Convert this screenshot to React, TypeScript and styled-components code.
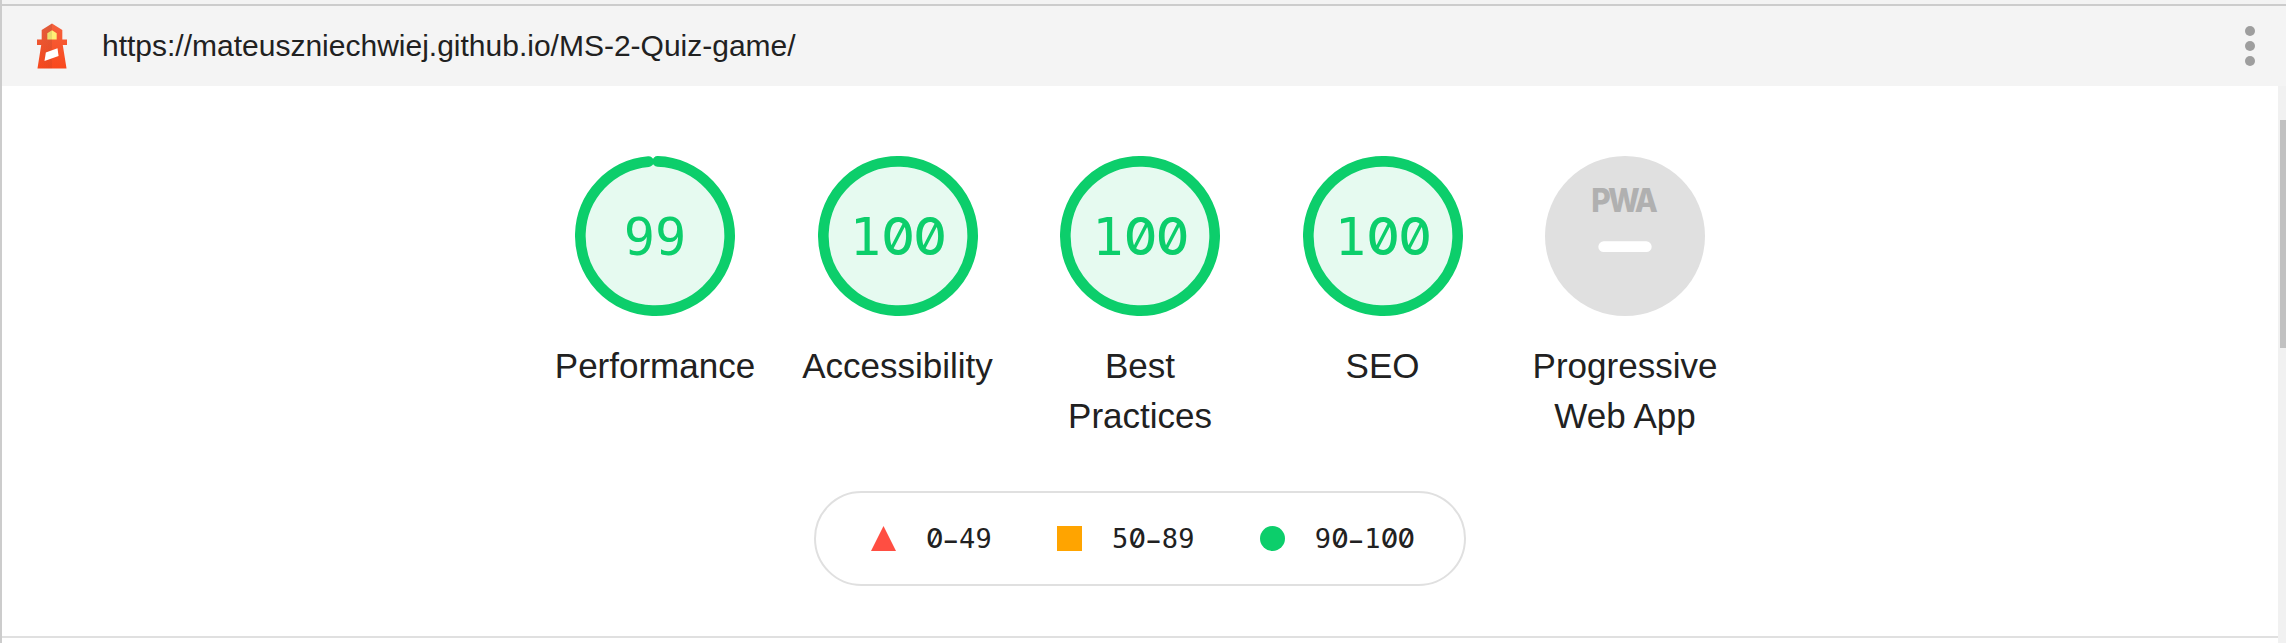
import React from 'react';
import styled, { createGlobalStyle } from 'styled-components';

const GlobalStyle = createGlobalStyle`
  * { box-sizing: border-box; }
  body { margin: 0; background: #fff; color: #212121; font-family: 'Liberation Sans', Arial, sans-serif; }
`;

const Panel = styled.div`
  display: flex;
  flex-direction: column;
  height: 643px;
  overflow: hidden;
  border-left: 2px solid #ccc;
`;

const TabStrip = styled.div`
  flex: none;
  height: 6px;
  background: #f3f3f3;
  border-bottom: 2px solid #ccc;
`;

const Topbar = styled.header`
  flex: none;
  display: flex;
  align-items: center;
  height: 80px;
  padding: 0 31px 0 20px;
  background: #f4f4f4;
`;

const Logo = styled.svg`
  flex: none;
  width: 60px;
  height: 60px;
`;

const Url = styled.span`
  flex: 1;
  margin-left: 20px;
  font-size: 30px;
  line-height: 50px;
`;

const Menu = styled.div`
  display: flex;
  flex-direction: column;
  gap: 5px;
`;

const Dot = styled.i`
  width: 10px;
  height: 10px;
  border-radius: 50%;
  background: #9e9e9e;
`;

const Body = styled.div`
  flex: 1;
  display: flex;
  min-height: 0;
`;

const Report = styled.main`
  flex: 1;
  display: flex;
  flex-direction: column;
  align-items: center;
  padding-top: 70px;
`;

const Scrollbar = styled.div`
  width: 8px;
  padding: 34px 0 0 2px;
  background: #f1f1f1;
`;

const Thumb = styled.div`
  height: 228px;
  background: #c1c1c1;
`;

const Scores = styled.div`
  display: grid;
  grid-template-columns: repeat(5, 242.5px);
  height: 335px;
`;

const Gauge = styled.div`
  display: flex;
  flex-direction: column;
  align-items: center;
`;

const GaugeArt = styled.svg`
  flex: none;
  width: 160px;
  height: 160px;
`;

const GaugeLabel = styled.div<{ $width: number }>`
  width: ${(p) => p.$width}px;
  margin-top: 25px;
  font-size: 35px;
  line-height: 50px;
  text-align: center;
`;

const Dial = styled.div`
  display: grid;
  width: 160px;
  height: 160px;
  > * { grid-area: 1 / 1; }
`;

const Score = styled.div`
  margin-top: 43px;
  color: #0cce6b;
  font: 52px/76px 'DejaVu Sans Mono', monospace;
  text-align: center;
`;

const Legend = styled.div`
  flex: none;
  display: flex;
  align-items: center;
  gap: 65px;
  width: 652px;
  height: 95px;
  padding-left: 55px;
  border: 2px solid #e0e0e0;
  border-radius: 48px;
`;

const Range = styled.span`
  display: flex;
  align-items: center;
  gap: 30px;
  font: 27px/40px 'DejaVu Sans Mono', monospace;
  letter-spacing: 0.245px;
`;

const RangeText = styled.span`
  margin-top: 2px;
`;

const Zero = styled.span`
  font-family: Inter, sans-serif;
  font-weight: 450;
  font-feature-settings: 'zero' 1, 'tnum' 1;
  letter-spacing: -0.032em;
`;

const Dash = styled.span`
  padding: 0 0.06em;
  font-family: 'Liberation Sans', Arial, sans-serif;
  font-size: 0.9em;
  font-weight: 700;
  letter-spacing: 0;
`;

const Mark = styled.svg`
  width: 25px;
  height: 25px;
`;

const Divider = styled.div`
  align-self: stretch;
  height: 2px;
  margin-top: 50px;
  background: #e0e0e0;
`;

const GREEN = '#0cce6b';
const RING = 2 * Math.PI * 56;

function Figures({ text }: { text: string }) {
  return (
    <>
      {text.split(/(0+|–)/).filter(Boolean).map((part, i) =>
        part[0] === '0' ? <Zero key={i}>{part}</Zero> : part === '–' ? <Dash key={i}>{part}</Dash> : part,
      )}
    </>
  );
}

function LighthouseLogo() {
  return (
    <Logo viewBox="0 0 24 24">
      <defs>
        <linearGradient id="shade" x1="1" y1="0" x2="0" y2="1">
          <stop stopColor="#262626" stopOpacity=".12" />
          <stop offset="1" stopColor="#262626" stopOpacity="0" />
        </linearGradient>
        <linearGradient id="tower" x1="0" y1="0" x2="0" y2="1">
          <stop stopColor="#f5623d" />
          <stop offset="1" stopColor="#f9481d" />
        </linearGradient>
      </defs>
      <path fill="url(#tower)" d="M12 3l4.125 2.625v3.75H18v2.25h-1.688l1.5 9.375H6.188l1.5-9.375H6v-2.25h1.875V5.648L12 3z" />
      <path fill="#fff176" d="M12.005 5.67l-1.88 1.207v2.498h3.75V6.86z" />
      <path fill="url(#shade)" d="M12 3v18H6.188l1.5-9.375H6v-2.25h1.875V5.648z" />
      <path fill="#fff" d="M14.201 12.938L9.54 14.633 9 18.028l5.625-2.062z" />
    </Logo>
  );
}

function ScoreGauge({ label, score, width }: { label: string; score: number; width: number }) {
  return (
    <Gauge>
      <Dial>
        <GaugeArt viewBox="0 0 120 120">
          <circle cx="60" cy="60" r="56" fill="#e6faf0" />
          <circle
            cx="60" cy="60" r="56" fill="none" stroke={GREEN} strokeWidth="8" strokeLinecap="round"
            strokeDasharray={score === 100 ? undefined : `${(score / 100) * RING - 4} ${RING}`}
            transform="rotate(-87.9537 60 60)"
          />
        </GaugeArt>
        <Score><Figures text={String(score)} /></Score>
      </Dial>
      <GaugeLabel $width={width}>{label}</GaugeLabel>
    </Gauge>
  );
}

function PwaGauge() {
  return (
    <Gauge>
      <GaugeArt viewBox="0 0 60 60">
        <circle cx="30" cy="30" r="30" fill="#e0e0e0" />
        <text
          x="17.3" y="21" textLength="24" lengthAdjust="spacingAndGlyphs" letterSpacing="-1.1"
          fill="#b0b0b0" fontSize="12.35" fontWeight="800" fontFamily="Inter, sans-serif"
        >
          PWA
        </text>
        <rect x="20" y="32" width="20" height="4" rx="2" fill="#fff" />
      </GaugeArt>
      <GaugeLabel $width={200}>Progressive Web App</GaugeLabel>
    </Gauge>
  );
}

export default function App() {
  return (
    <>
      <GlobalStyle />
      <Panel>
        <TabStrip />
        <Topbar>
          <LighthouseLogo />
          <Url>https://mateuszniechwiej.github.io/MS-2-Quiz-game/</Url>
          <Menu><Dot /><Dot /><Dot /></Menu>
        </Topbar>
        <Body>
          <Report>
            <Scores>
              <ScoreGauge label="Performance" score={99} width={210} />
              <ScoreGauge label="Accessibility" score={100} width={210} />
              <ScoreGauge label="Best Practices" score={100} width={200} />
              <ScoreGauge label="SEO" score={100} width={200} />
              <PwaGauge />
            </Scores>
            <Legend>
              <Range>
                <Mark viewBox="0 0 25 25"><path d="M12.5 0L25 25H0z" fill="#ff4e42" /></Mark>
                <RangeText><Figures text="0–49" /></RangeText>
              </Range>
              <Range>
                <Mark viewBox="0 0 25 25"><rect width="25" height="25" fill="#ffa400" /></Mark>
                <RangeText><Figures text="50–89" /></RangeText>
              </Range>
              <Range>
                <Mark viewBox="0 0 25 25"><circle cx="12.5" cy="12.5" r="12.5" fill={GREEN} /></Mark>
                <RangeText><Figures text="90–100" /></RangeText>
              </Range>
            </Legend>
            <Divider />
          </Report>
          <Scrollbar><Thumb /></Scrollbar>
        </Body>
      </Panel>
    </>
  );
}
